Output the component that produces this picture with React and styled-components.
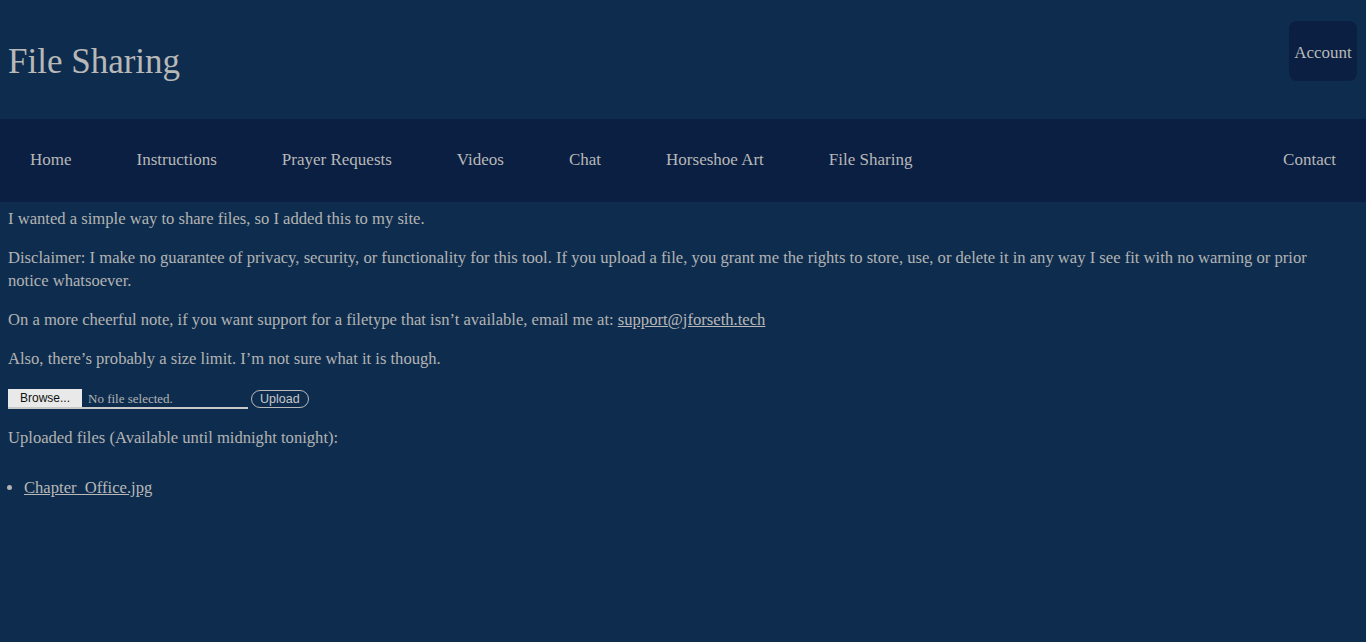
import React from 'react'
import styled, { createGlobalStyle } from 'styled-components'

const GlobalStyle = createGlobalStyle`
  html, body {
    margin: 0;
    background: #0e2d4e;
  }
  body {
    font-family: "Liberation Serif", "DejaVu Serif", serif;
    color: #b3b3b3;
    min-height: 642px;
  }
`

const Header = styled.header`
  display: flex;
  justify-content: space-between;
  align-items: flex-start;
  height: 119px;
  padding: 0 9px 0 8px;
`

const Title = styled.h1`
  margin: 42px 0 0;
  font-size: 35px;
  font-weight: normal;
  color: #b8b8b8;
`

const AccountButton = styled.button`
  margin-top: 21px;
  width: 68px;
  height: 60px;
  border: none;
  border-radius: 8px;
  background: #0a1f42;
  color: #b8b8b8;
  font-family: inherit;
  font-size: 17px;
  padding: 4px 0 0;
`

const Nav = styled.nav`
  display: flex;
  align-items: center;
  height: 83px;
  padding: 0 30px 2px;
  box-sizing: border-box;
  background: #0a1f42;
  gap: 65px;
`

const NavLink = styled.a`
  color: #b8b8b8;
  font-size: 17px;
  text-decoration: none;
  margin-left: ${p => (p.$right ? 'auto' : '0')};
`

const Content = styled.main`
  padding: 0 20px 0 8px;
  font-size: 16.6px;
  line-height: 23px;
  p {
    margin: 5px 0 16px;
  }
  a {
    color: #b8b8b8;
  }
`

const UploadRow = styled.form`
  display: flex;
  align-items: center;
  gap: 3px;
  margin: 19px 0 17px;
`

const FileBox = styled.label`
  display: flex;
  align-items: center;
  width: 240px;
  height: 20px;
  border-bottom: 2px solid #c8c8c8;
  box-sizing: border-box;
`

const BrowseButton = styled.span`
  display: inline-flex;
  align-items: center;
  justify-content: center;
  width: 74px;
  height: 18px;
  background: #e9e9e9;
  color: #111;
  font-family: "Liberation Sans", Arial, sans-serif;
  font-size: 12px;
`

const FileName = styled.span`
  margin-left: 6px;
  font-size: 13px;
  color: #b3b3b3;
`

const UploadButton = styled.button`
  height: 18px;
  padding: 0 8px;
  border: 1px solid #b8b8b8;
  border-radius: 9px;
  background: transparent;
  color: #c8c8c8;
  font-family: "Liberation Sans", Arial, sans-serif;
  font-size: 12.5px;
`

const FileList = styled.ul`
  margin: 27px 0 0;
  padding-left: 16px;
`

export default function App() {
  const links = ['Home', 'Instructions', 'Prayer Requests', 'Videos', 'Chat', 'Horseshoe Art', 'File Sharing']
  return (
    <>
      <GlobalStyle />
      <Header>
        <Title>File Sharing</Title>
        <AccountButton>Account</AccountButton>
      </Header>
      <Nav>
        {links.map(l => (
          <NavLink key={l} href="#">{l}</NavLink>
        ))}
        <NavLink href="#" $right>Contact</NavLink>
      </Nav>
      <Content>
        <p>I wanted a simple way to share files, so I added this to my site.</p>
        <p>
          Disclaimer: I make no guarantee of privacy, security, or functionality for this tool. If you upload a file, you grant me the rights to store, use, or delete it in any way I see fit with no warning or prior notice whatsoever.
        </p>
        <p>
          On a more cheerful note, if you want support for a filetype that isn’t available, email me at: <a href="#">support@jforseth.tech</a>
        </p>
        <p>Also, there’s probably a size limit. I’m not sure what it is though.</p>
        <UploadRow>
          <FileBox>
            <BrowseButton>Browse...</BrowseButton>
            <FileName>No file selected.</FileName>
          </FileBox>
          <UploadButton type="button">Upload</UploadButton>
        </UploadRow>
        <div>Uploaded files (Available until midnight tonight):</div>
        <FileList>
          <li><a href="#">Chapter_Office.jpg</a></li>
        </FileList>
      </Content>
    </>
  )
}
